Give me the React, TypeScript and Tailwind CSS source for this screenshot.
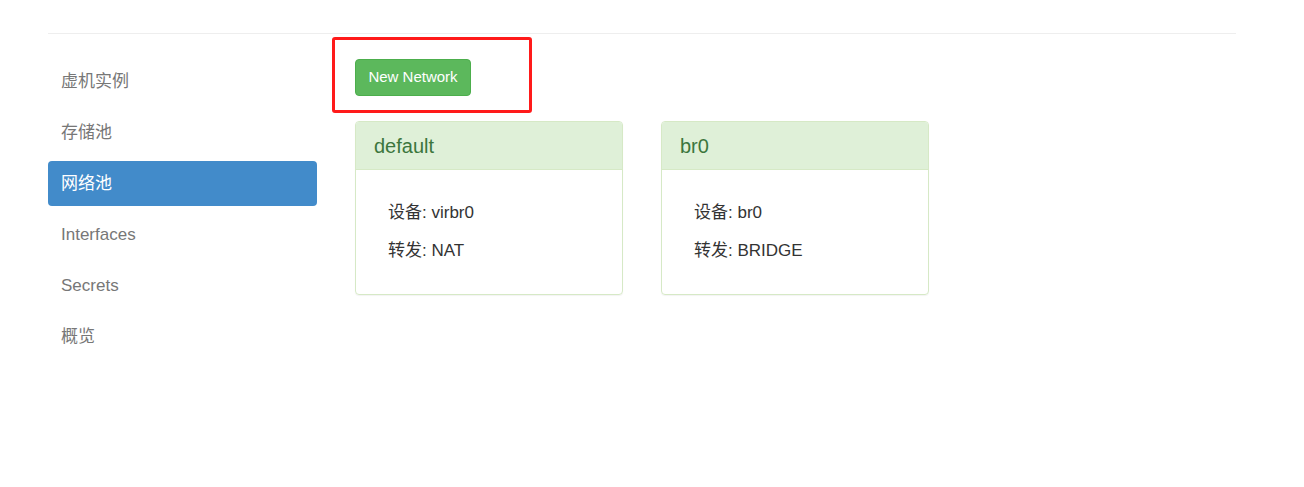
import React from 'react'

const navItems = ['虚机实例', '存储池', '网络池', 'Interfaces', 'Secrets', '概览']

const networks = [
  { name: 'default', device: 'virbr0', forward: 'NAT' },
  { name: 'br0', device: 'br0', forward: 'BRIDGE' },
]

export default function App() {
  return (
    <div
      className="relative h-[487px] w-[1304px] bg-white px-[48px] text-[#333]"
      style={{ fontFamily: '"Liberation Sans", "Noto Sans CJK SC", sans-serif' }}
    >
      <div className="h-[34px] w-[1188px] border-b border-[#eeeeee]" />

      <div className="flex">
        <ul className="mt-[25px] flex w-[269px] flex-col gap-[6px]">
          {navItems.map((item) => (
            <li
              key={item}
              className={
                item === '网络池'
                  ? 'flex h-[45px] items-center rounded-[4px] bg-[#428bca] pl-[13px] text-[17px] text-white'
                  : 'flex h-[45px] items-center rounded-[4px] pl-[13px] text-[17px] text-[#777]'
              }
            >
              {item}
            </li>
          ))}
        </ul>

        <div className="pl-[38px] pt-[25px]">
          <button className="h-[37px] w-[116px] rounded-[4px] border border-[#4cae4c] bg-[#5cb85c] text-[15px] text-white">
            New Network
          </button>

          <div className="mt-[25px] flex gap-[38px]">
            {networks.map((n) => (
              <div
                key={n.name}
                className="w-[268px] overflow-hidden rounded-[4px] border border-[#d6e9c6] shadow-[0_1px_1px_rgba(0,0,0,0.05)]"
              >
                <div className="flex h-[48px] items-center border-b border-[#d6e9c6] bg-[#dff0d8] px-[18px] text-[20px] text-[#3c763d]">
                  {n.name}
                </div>
                <div className="flex flex-col gap-[14px] pb-[31px] pl-[32px] pt-[31px] text-[17px] leading-[24px]">
                  <div>设备: {n.device}</div>
                  <div>转发: {n.forward}</div>
                </div>
              </div>
            ))}
          </div>
        </div>
      </div>

      <div className="absolute left-[332px] top-[37px] h-[76px] w-[200px] rounded-[3px] border-[3px] border-[#ff1a1a]" />
    </div>
  )
}
